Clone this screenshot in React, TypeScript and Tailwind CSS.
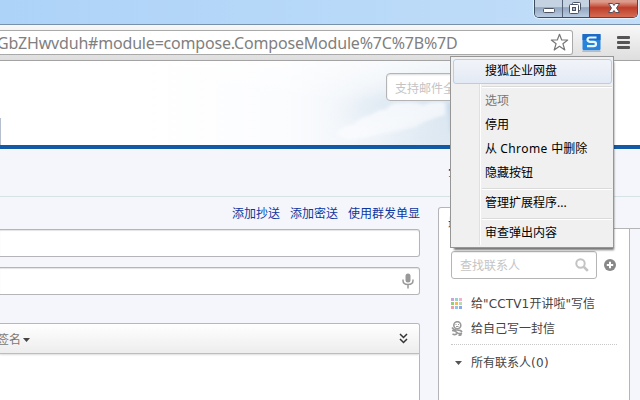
import type { ReactNode } from "react";

function WindowControls() {
  return (
    <div className="absolute top-0 left-[534px] flex h-[18px] w-[104px] overflow-hidden rounded-b-[5px] border border-t-0 border-[#3f4d60] shadow-[0_0_1px_1px_rgba(255,255,255,0.6)]">
      <div className="w-7 border-r border-[#526078] bg-linear-to-b from-[#c5d2e2] from-40% via-[#93a6bf] via-45% to-[#b8cce2]">
        <svg width="28" height="17" viewBox="0 0 28 17">
          <rect x="8.5" y="8.5" width="11" height="4" rx="1" fill="#fff" stroke="#4c5464" />
        </svg>
      </div>
      <div className="w-[27px] border-r border-[#4d3a45] bg-linear-to-b from-[#c5d2e2] from-40% via-[#93a6bf] via-45% to-[#b8cce2]">
        <svg width="26" height="17" viewBox="0 0 26 17" fill="#fff" stroke="#4c5464">
          <rect x="9.5" y="2.5" width="8" height="8" rx="1" />
          <rect x="6.5" y="4.5" width="9" height="9" rx="1" />
          <rect x="9.5" y="7.5" width="3" height="3" fill="#a9b8cb" />
        </svg>
      </div>
      <div className="flex-1 bg-linear-to-b from-[#dc9c8d] from-10% via-[#bd3e29] via-45% to-[#d66a52]">
        <svg width="47" height="17" viewBox="0 0 47 17">
          <path d="M18.500 3.500h4l1.500 2 1.500-2h4L26.500 8l3 4.500h-4l-1.500-2-1.500 2h-4L21.500 8z" fill="#fff" stroke="#57505c" />
        </svg>
      </div>
    </div>
  );
}

function BrowserToolbar() {
  return (
    <div className="flex h-9 items-center border-b border-[#a3a3a3] bg-linear-to-b from-[#f8f8f8] to-[#dedede]">
      <div className="flex h-[25px] w-[573px] shrink-0 items-center justify-between overflow-hidden rounded-r-[3px] border border-l-0 border-[#a9a9a9] bg-white">
        <span className="-ml-[3px] whitespace-nowrap font-['Noto_Sans',sans-serif] text-[16px] leading-[22px] tracking-[-0.19px] text-[#808080]">
          GbZHwvduh#module=compose.ComposeModule%7C%7B%7D
        </span>
        <svg className="mr-[3px] shrink-0" width="19" height="19" viewBox="0 0 19 19">
          <path d="M9.500 1.300 11.700 7h6l-4.800 3.700 1.900 6.300-5.300-3.700L4.200 17l1.900-6.300L1.300 7h6z" fill="#fff" stroke="#777" strokeWidth="1.2" strokeLinejoin="round" />
        </svg>
      </div>
      <svg className="ml-[9px] shrink-0" width="20" height="20" viewBox="0 0 20 20">
        <rect x="0.5" y="1" width="18" height="16" rx="1" fill="#2784dc" />
        <rect x="0.5" y="1" width="18" height="6" fill="#1d6bc6" />
        <path d="M1 17h17l1 2H0z" fill="#a9bfd5" />
        <path d="M14.500 4.500H8Q5.500 4.500 5.500 6.500T8 8.800h3.500q2.500 0 2.500 2.200T11.500 13.200H5" fill="none" stroke="#e8f6ff" strokeWidth="2.2" />
      </svg>
      <div className="ml-[15px] flex flex-col gap-[2px]">
        <i className="h-[3px] w-[13px] rounded-[1px] bg-[#555]" />
        <i className="h-[3px] w-[13px] rounded-[1px] bg-[#555]" />
        <i className="h-[3px] w-[13px] rounded-[1px] bg-[#555]" />
      </div>
    </div>
  );
}

function Sky() {
  return (
    <svg className="absolute inset-0" width="640" height="84" viewBox="0 0 640 84">
      <defs>
        <linearGradient id="sky" x1="0" x2="1" y1="0" y2="0">
          <stop offset="0" stopColor="#fff" />
          <stop offset="0.45" stopColor="#fbfcfe" />
          <stop offset="0.75" stopColor="#eff4f9" />
          <stop offset="1" stopColor="#e0eaf3" />
        </linearGradient>
        <linearGradient id="top" x1="0" x2="0" y1="0" y2="1">
          <stop offset="0" stopColor="#fff" stopOpacity="0.6" />
          <stop offset="1" stopColor="#fff" stopOpacity="0" />
        </linearGradient>
        <filter id="soft" x="-50%" y="-100%" width="200%" height="300%">
          <feGaussianBlur stdDeviation="10" />
        </filter>
        <filter id="puff" x="-20%" y="-50%" width="140%" height="200%">
          <feGaussianBlur stdDeviation="1.8" />
        </filter>
      </defs>
      <rect x="140" width="320" height="84" fill="url(#sky)" />
      <path d="M335 58 370 36 410 26H480V60L390 52z" fill="#cfdfed" opacity="0.6" filter="url(#soft)" />
      <path d="M337 72q8-9 16-8 8-8 18-10 9-6 14-5 8-9 18-7 10-2 20 2 12-5 22-2v12q-16 4-30 12-26 6-58 12-12 2-20-6z" fill="#fbfcfe" opacity="0.75" filter="url(#puff)" />
      <path d="M370 86q22-9 42-12 20-10 48-16v28z" fill="#d5e3ee" opacity="0.55" filter="url(#soft)" />
      <path d="M448 42h12v30h-10z" fill="#c3d7e8" opacity="0.8" filter="url(#puff)" />
      <rect x="140" width="320" height="40" fill="url(#top)" />
      <rect x="614" width="26" height="84" fill="#fff" />
    </svg>
  );
}

function MailHeader() {
  return (
    <div className="relative h-[88px] overflow-hidden border-b-4 border-[#1259a6] bg-white">
      <Sky />
      <div className="relative flex h-full items-start">
        <div className="mt-[57px] h-[27px] w-px bg-[#b5bfce]" />
        <div className="mt-3 ml-[385px] h-7 w-[180px] rounded-[4px] border border-[#b4b4b4] bg-white pl-2 text-xs leading-[30px] text-[#c4c4c4] shadow-[inset_0_1px_2px_#ddd]">
          支持邮件全
        </div>
      </div>
    </div>
  );
}

function ComposeForm() {
  return (
    <div className="flex w-[420px] shrink-0 flex-col">
      <div className="flex h-8 shrink-0 items-center justify-end gap-[10px] pt-[2px] text-xs text-[#0a37a0]">
        <span>添加抄送</span>
        <span>添加密送</span>
        <span>使用群发单显</span>
      </div>
      <div className="h-7 shrink-0 rounded-r-[3px] border border-l-0 border-[#b5b5b8] bg-white shadow-[inset_0_1px_1px_#e4e4e4]" />
      <div className="mt-[10px] flex h-7 shrink-0 items-center justify-end rounded-r-[3px] border border-l-0 border-[#b5b5b8] bg-white pr-[5px] shadow-[inset_0_1px_1px_#e4e4e4]">
        <svg width="12" height="16" viewBox="0 0 12 16">
          <rect x="3.5" y="0.5" width="5" height="9" rx="2.5" fill="#999" />
          <path d="M1 6.500v1q0 4 5 4t5-4v-1M6 11.500V15.500" fill="none" stroke="#999" strokeWidth="1.5" />
        </svg>
      </div>
      <div className="mt-7 h-[78px] shrink-0 rounded-tr-[3px] border border-b-0 border-l-0 border-[#b5b5b8] bg-white">
        <div className="flex h-[30px] items-center justify-between rounded-tr-[2px] border-b border-[#bdbdbd] bg-linear-to-b from-white to-[#ededed] pr-[11px] shadow-[0_1px_2px_#ddd]">
          <span className="-ml-[3px] flex items-center gap-[2px] pt-[2px] text-xs text-[#777]">
            签名
            <svg width="7" height="4" viewBox="0 0 7 4"><path d="M0 0h7L3.500 4z" fill="#444" /></svg>
          </span>
          <svg width="9" height="11" viewBox="0 0 9 11" fill="none" stroke="#333" strokeWidth="1.5">
            <path d="m1 1 3.500 3.500L8 1M1 6l3.500 3.500L8 6" />
          </svg>
        </div>
      </div>
    </div>
  );
}

function ContactsPanel() {
  return (
    <div className="mt-[10px] ml-[18px] flex h-[200px] w-48 shrink-0 flex-col rounded-t-[3px] border border-b-0 border-[#b5b5b8] bg-white px-3 text-xs text-[#444]">
      <div className="-ml-[3px] h-[43px] pt-[7px] leading-[16px] text-[#222]">最</div>
      <div className="flex items-center">
        <div className="flex h-7 w-[146px] shrink-0 items-center justify-between rounded-[3px] border border-[#b5b5b8] pr-[7px] pl-2 text-[#c4c4c4] shadow-[inset_0_1px_1px_#eee]">
          <span className="pt-[2px]">查找联系人</span>
          <svg width="14" height="14" viewBox="0 0 14 14" fill="none" stroke="#c3c3c3" strokeWidth="2">
            <circle cx="5.5" cy="5.5" r="4.2" />
            <path d="m8.800 8.800 4 4" strokeWidth="2.6" />
          </svg>
        </div>
        <svg className="ml-[7px] shrink-0" width="12" height="12" viewBox="0 0 12 12">
          <circle cx="6" cy="6" r="6" fill="#888" />
          <path d="M6 2.800v6.400M2.800 6h6.400" stroke="#fff" strokeWidth="2" />
        </svg>
      </div>
      <div className="mt-[11px] flex h-[26px] items-center gap-[9px]">
        <svg width="11" height="11" viewBox="0 0 11 11">
          <path fill="#c9a6dc" d="M0 0h3v3H0z" /><path fill="#92d4cf" d="M4 0h3v3H4z" /><path fill="#f3b1d0" d="M8 0h3v3H8z" />
          <path fill="#95cf73" d="M0 4h3v3H0z" /><path fill="#f6b957" d="M4 4h3v3H4z" /><path fill="#b7dca9" d="M8 4h3v3H8z" />
          <path fill="#ee9fa9" d="M0 8h3v3H0z" /><path fill="#91c6ea" d="M4 8h3v3H4z" /><path fill="#85aaf0" d="M8 8h3v3H8z" />
        </svg>
        <span className="pt-px whitespace-nowrap">给<span className="font-['DejaVu_Sans'] text-[12px] tracking-[0.15px]">"CCTV1</span>开讲啦<span className="font-['DejaVu_Sans']">"</span>写信</span>
      </div>
      <div className="flex h-[29px] items-center gap-2 border-b border-dotted border-[#c8c8c8] pb-[4px]">
        <svg width="12" height="15" viewBox="0 0 12 15" fill="none" stroke="#999" strokeWidth="1.6">
          <circle cx="6.3" cy="4.2" r="3.5" />
          <path d="M4.500 3.500h1M7 3.500h1M5 5.500h2.500" strokeWidth="1" />
          <path d="M1 6.500q2 3 5 2.500 4 0 5 2M1 9.500q3 0 5 2 2 2 5 .5M1.500 13q3 1.500 4.500-.5M7.500 14.200q2 .5 3-1" />
        </svg>
        <span className="pt-[2px]">给自己写一封信</span>
      </div>
      <div className="flex h-[35px] items-center pl-1">
        <svg width="7" height="4" viewBox="0 0 7 4"><path d="M0 0h7L3.500 4z" fill="#555" /></svg>
        <span className="ml-[9px]">所有联系人<span className="font-['DejaVu_Sans'] tracking-[0.3px]">(0)</span></span>
      </div>
    </div>
  );
}

function MenuItem({ children }: { children: ReactNode }) {
  return <div className="h-6 pl-[34px] leading-[22px] whitespace-nowrap">{children}</div>;
}

function Separator() {
  return <div className="ml-[29px] h-[6px] pt-[2px]"><div className="h-[2px] border-t border-[#dadada] bg-white" /></div>;
}

function ExtensionMenu() {
  return (
    <div className="absolute top-14 left-[450px] h-[192px] w-[164px] border border-[#969696] bg-[#f0f0f0] p-[2px] pr-px text-xs text-black shadow-[2px_4px_2px_-2px_rgba(0,0,0,0.55)] font-['Noto_Sans','Noto_Sans_CJK_SC',sans-serif]">
      <div className="absolute top-[2px] bottom-[2px] left-[28px] w-[2px] border-l border-[#e0e0e0] bg-white" />
      <div className="relative">
        <div className="-mr-px h-[25px] w-[159px] rounded-[3px] border border-[#afcff5] bg-linear-to-b from-[#f1f4f9] to-[#e3eaf5] pl-[31px] leading-[21px]">搜狐企业网盘</div>
        <Separator />
        <div className="-ml-[2px]">
          <div className="text-[#777]"><MenuItem>选项</MenuItem></div>
          <MenuItem>停用</MenuItem>
          <MenuItem>从 <span className="tracking-[0.45px]">Chrome </span>中删除</MenuItem>
          <MenuItem>隐藏按钮</MenuItem>
        </div>
        <Separator />
        <div className="-ml-[2px]"><MenuItem>管理扩展程序...</MenuItem></div>
        <Separator />
        <div className="-ml-[2px]"><MenuItem>审查弹出内容</MenuItem></div>
      </div>
    </div>
  );
}

export default function App() {
  return (
    <div className="relative h-[400px] w-[640px] overflow-hidden bg-[#f4f6fb] font-['Liberation_Sans','Noto_Sans_CJK_SC',sans-serif]">
      <div className="relative h-[25px] border-b border-[#7890aa] bg-linear-to-r from-[#add3f8] to-[#c2def8]">
        <WindowControls />
      </div>
      <BrowserToolbar />
      <MailHeader />
      <div className="h-12 border-b border-[#d5e2e6] pt-[17px] pl-[448px] text-xs leading-[18px] text-[#0a37a0]">写</div>
      <div className="flex h-[203px]">
        <ComposeForm />
        <ContactsPanel />
      </div>
      <div className="absolute top-[149px] left-[614px] h-20 w-[26px] border-b border-[#b5b5b8] bg-[#f4f6fb]">
        <div className="h-[48px] border-b border-[#d5e2e6]" />
      </div>
      <ExtensionMenu />
    </div>
  );
}
